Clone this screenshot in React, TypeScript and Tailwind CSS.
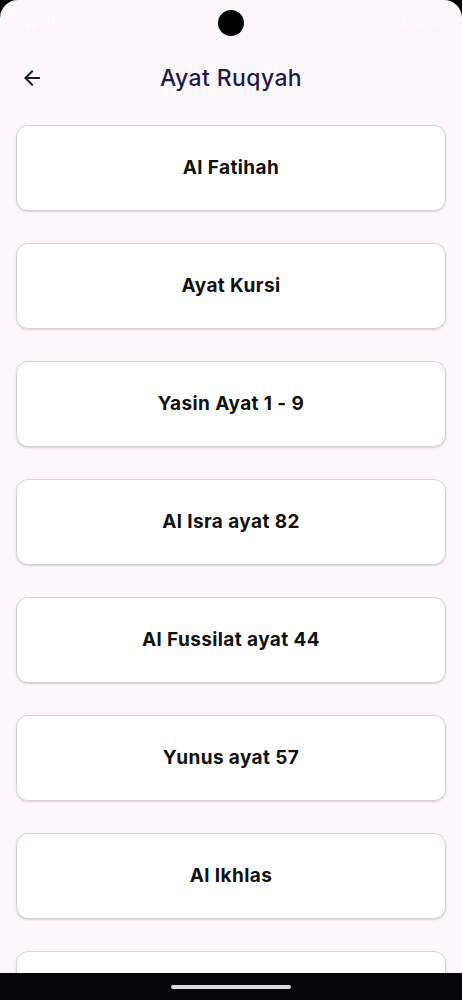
import React from 'react';

const items = [
  'Al Fatihah',
  'Ayat Kursi',
  'Yasin Ayat 1 - 9',
  'Al Isra ayat 82',
  'Al Fussilat ayat 44',
  'Yunus ayat 57',
  'Al Ikhlas',
  '',
];

const App: React.FC = () => {
  return (
    <div className="bg-black h-[1000px] w-[462px] overflow-hidden">
      <div
        className="relative h-[1000px] w-[462px] overflow-hidden rounded-t-[18px] bg-[#fdf7fb]"
        style={{ fontFamily: 'Inter, "Open Sans", sans-serif' }}
      >
        {/* Status bar */}
        <div className="relative h-[46px] flex items-center justify-between px-[24px] text-white/80 text-sm font-medium">
          <span>12:30</span>
          <div className="absolute left-[218px] top-[10px] h-[26px] w-[26px] rounded-full bg-black" />
          <span>100%</span>
        </div>

        {/* Top app bar */}
        <div className="relative flex h-[64px] items-center justify-center">
          <button className="absolute left-[20px] top-[20px] h-6 w-6 text-[#1d1b20]">
            <svg viewBox="0 0 24 24" className="h-6 w-6" fill="currentColor">
              <path d="M20 11H7.83l5.59-5.59L12 4l-8 8 8 8 1.41-1.41L7.83 13H20v-2z" />
            </svg>
          </button>
          <h1 className="text-[23px] font-medium text-[#1c1b4b] tracking-[0.4px]">Ayat Ruqyah</h1>
        </div>

        {/* List */}
        <div className="flex flex-col gap-[32px] px-[16px] pt-[15px]">
          {items.map((item, i) => (
            <div
              key={i}
              className="flex h-[86px] shrink-0 items-center justify-center rounded-[12px] border border-[#d4d2d4] bg-white shadow-[0_1px_2px_rgba(0,0,0,0.15)]"
            >
              <span className="text-[19px] font-bold tracking-[0.4px] text-[#111111]">{item}</span>
            </div>
          ))}
        </div>

        {/* Navigation bar */}
        <div className="absolute bottom-0 left-0 right-0 flex h-[27px] items-center justify-center bg-[#060507]">
          <div className="h-[4px] w-[120px] rounded-full bg-[#d9d9d9]" />
        </div>
      </div>
    </div>
  );
};

export default App;
